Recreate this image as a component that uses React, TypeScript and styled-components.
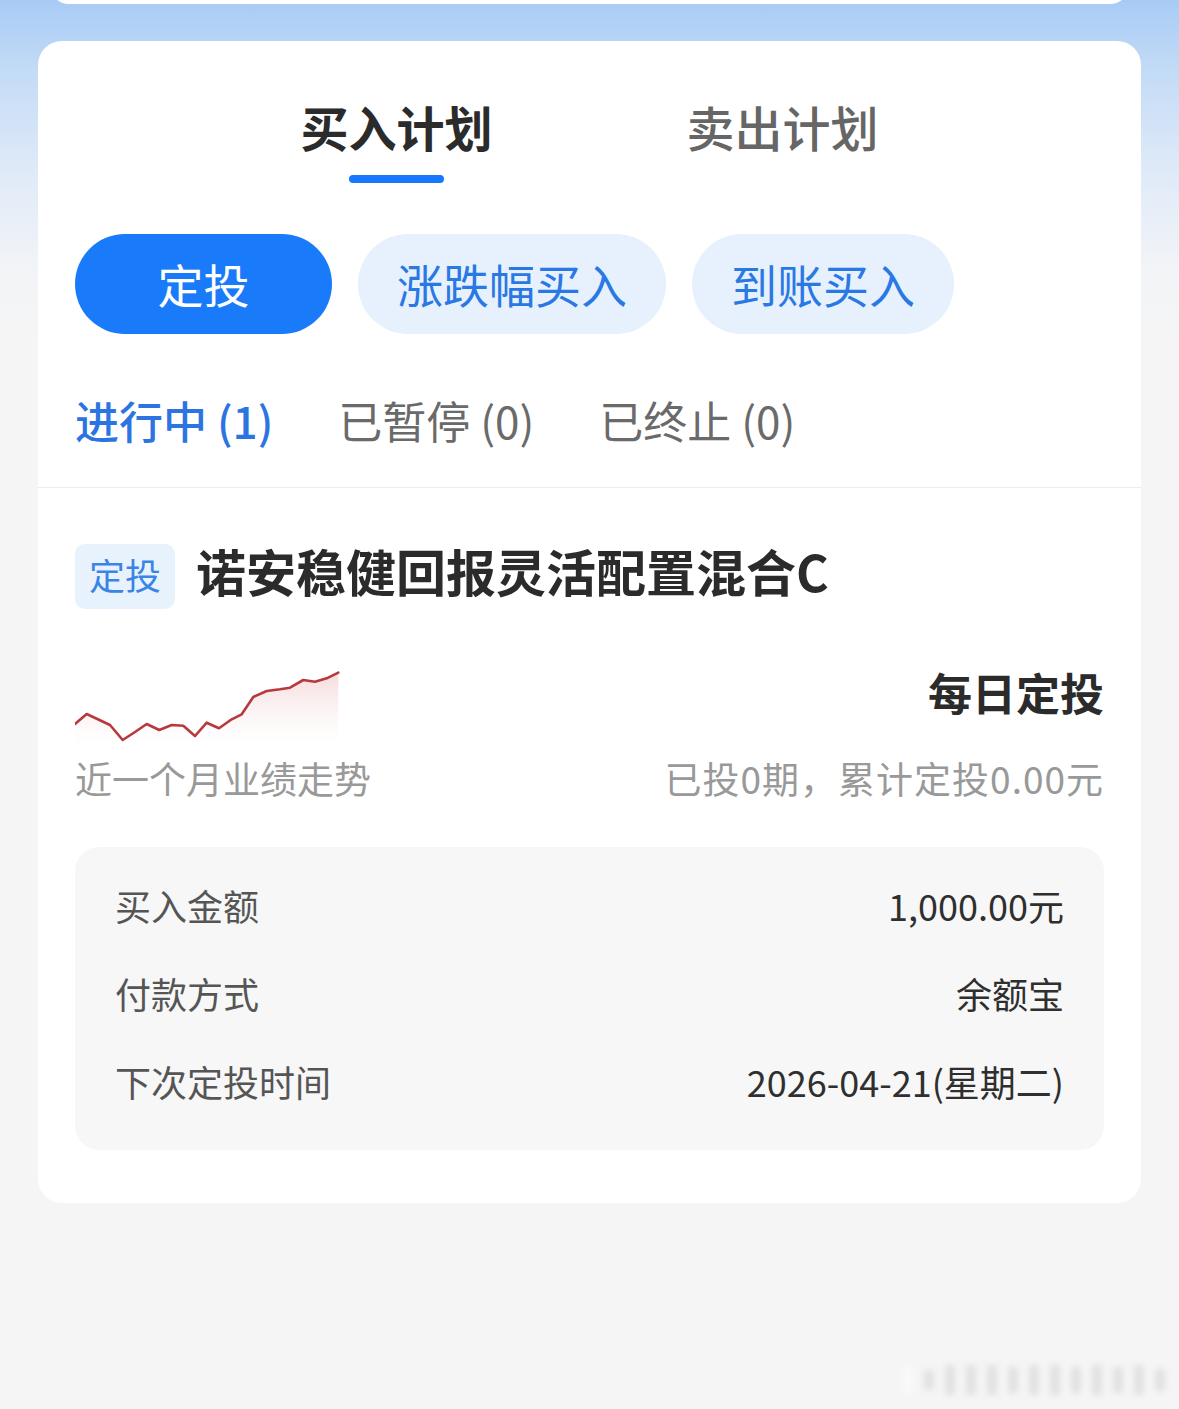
import React from "react";
import styled, { createGlobalStyle } from "styled-components";

const GlobalStyle = createGlobalStyle`
  html, body { margin: 0; padding: 0; }
  body {
    font-family: "Noto Sans CJK SC", "Noto Sans", sans-serif;
    background: #f5f5f5;
  }
  * { box-sizing: border-box; }
`;

const Page = styled.div`
  position: relative;
  min-height: 1409px;
  overflow: hidden;
  background: linear-gradient(
    180deg,
    #a8cbf5 0px,
    #c3dbf6 70px,
    #dfeaf8 170px,
    #f2f4f7 270px,
    #f5f5f5 340px
  );
  padding: 0 38px;
`;

const TopStub = styled.div`
  height: 24px;
  margin: -20px 11px 0;
  background: #ffffff;
  border-radius: 0 0 20px 20px;
`;

const Card = styled.div`
  margin-top: 37px;
  background: #ffffff;
  border-radius: 24px;
  padding-bottom: 53px;
`;

const TopSection = styled.div`
  padding: 0 37px 39px;
`;

const PlanTabs = styled.div`
  display: flex;
  justify-content: center;
  gap: 194px;
  padding-top: 55px;
`;

const PlanTab = styled.div<{ $active?: boolean }>`
  display: flex;
  flex-direction: column;
  align-items: center;
  font-size: 48px;
  line-height: 60px;
  font-weight: ${(p) => (p.$active ? 700 : 500)};
  color: ${(p) => (p.$active ? "#2b2b2b" : "#666666")};
  &::after {
    content: "";
    display: block;
    width: 95px;
    height: 8px;
    border-radius: 4px;
    margin-top: 19px;
    background: ${(p) => (p.$active ? "#1677ff" : "transparent")};
  }
`;

const Pills = styled.div`
  display: flex;
  gap: 26px;
  margin-top: 51px;
`;

const Pill = styled.div<{ $active?: boolean }>`
  height: 100px;
  min-width: 257px;
  padding: 0 39px 2px;
  border-radius: 50px;
  display: flex;
  align-items: center;
  justify-content: center;
  font-size: 46px;
  color: ${(p) => (p.$active ? "#ffffff" : "#2a78e4")};
  background: ${(p) => (p.$active ? "#1a7bfa" : "#e6f1fd")};
`;

const StatusTabs = styled.div`
  display: flex;
  gap: 65px;
  margin-top: 58px;
`;

const StatusTab = styled.div<{ $active?: boolean }>`
  font-size: 44px;
  line-height: 56px;
  padding-bottom: 4px;
  margin-bottom: -4px;
  font-weight: ${(p) => (p.$active ? 500 : 400)};
  color: ${(p) => (p.$active ? "#2b74e2" : "#6a6a6a")};
`;

const Divider = styled.div`
  height: 1px;
  background: #ececec;
`;

const FundSection = styled.div`
  padding: 56px 37px 0;
`;

const FundHeader = styled.div`
  display: flex;
  align-items: center;
  gap: 21px;
`;

const Badge = styled.div`
  width: 100px;
  height: 65px;
  border-radius: 10px;
  background: #e8f2fd;
  color: #3a84e6;
  font-size: 36px;
  padding-bottom: 6px;
  display: flex;
  align-items: center;
  justify-content: center;
`;

const FundName = styled.div`
  font-size: 50px;
  font-weight: 700;
  color: #2b2b2b;
  line-height: 65px;
  padding-bottom: 6px;
  margin-top: -6px;
`;

const ChartRow = styled.div`
  display: flex;
  justify-content: space-between;
  align-items: flex-start;
  margin-top: 54px;
`;

const PlanType = styled.div`
  margin-top: 1px;
  font-size: 44px;
  line-height: 56px;
  font-weight: 700;
  color: #2b2b2b;
`;

const CaptionRow = styled.div`
  display: flex;
  justify-content: space-between;
  margin-top: 8px;
`;

const Caption = styled.div<{ $wide?: boolean }>`
  font-size: 37px;
  line-height: 50px;
  color: #999999;
  letter-spacing: ${(p) => (p.$wide ? "1px" : "0")};
`;

const DetailBox = styled.div`
  margin-top: 44px;
  background: #f7f7f7;
  border-radius: 24px;
  padding: 33px 40px 44px;
  display: flex;
  flex-direction: column;
  gap: 38px;
`;

const DetailRow = styled.div`
  display: flex;
  justify-content: space-between;
  font-size: 36px;
  line-height: 50px;
`;

const DetailLabel = styled.span`
  color: #555555;
`;

const DetailValue = styled.span`
  color: #2f2f2f;
`;

const Watermark = styled.div`
  position: absolute;
  right: 14px;
  bottom: 14px;
  display: flex;
  align-items: center;
  gap: 11px;
  filter: blur(3px);
  opacity: 0.45;
`;

const WmBar = styled.div<{ $h: number; $light?: boolean }>`
  width: 10px;
  height: ${(p) => p.$h}px;
  background: ${(p) => (p.$light ? "#ffffff" : "#c9c9c9")};
`;

const chartPts: [number, number][] = [
  [0, 61], [11.7, 51], [35, 62], [47.7, 77], [60, 69], [71.7, 61], [84.3, 67],
  [96.7, 62], [108.3, 62.7], [120, 73], [131.7, 59.7], [144, 65.3], [156.7, 56.3],
  [166.7, 51.3], [178.3, 34], [191.7, 28], [205, 26.3], [215, 24.7], [228.3, 17],
  [240, 18.7], [251.7, 15.3], [263.3, 9.7],
];

const Trend: React.FC = () => {
  const line = chartPts.map((p) => p.join(",")).join(" ");
  const area = `M0,82 L${chartPts.map((p) => p.join(",")).join(" L")} L263.3,82 Z`;
  return (
    <svg width="266" height="82" viewBox="0 0 266 82">
      <defs>
        <linearGradient id="trendFill" x1="0" y1="0" x2="0" y2="1">
          <stop offset="0%" stopColor="#e39a9a" stopOpacity="0.35" />
          <stop offset="100%" stopColor="#f3d6d6" stopOpacity="0" />
        </linearGradient>
      </defs>
      <path d={area} fill="url(#trendFill)" />
      <polyline
        points={line}
        fill="none"
        stroke="#b7393d"
        strokeWidth="2.6"
        strokeLinejoin="round"
        strokeLinecap="round"
      />
    </svg>
  );
};

const details = [
  { label: "买入金额", value: "1,000.00元" },
  { label: "付款方式", value: "余额宝" },
  { label: "下次定投时间", value: "2026-04-21(星期二)" },
];

const wmBars = [
  { h: 30, light: true }, { h: 20 }, { h: 30 }, { h: 30 }, { h: 30 }, { h: 26 },
  { h: 30 }, { h: 30 }, { h: 26 }, { h: 30 }, { h: 26 }, { h: 30 }, { h: 22 },
];

export default function App() {
  return (
    <Page>
      <GlobalStyle />
      <TopStub />
      <Card>
        <TopSection>
          <PlanTabs>
            <PlanTab $active>买入计划</PlanTab>
            <PlanTab>卖出计划</PlanTab>
          </PlanTabs>
          <Pills>
            <Pill $active>定投</Pill>
            <Pill>涨跌幅买入</Pill>
            <Pill>到账买入</Pill>
          </Pills>
          <StatusTabs>
            <StatusTab $active>进行中 (1)</StatusTab>
            <StatusTab>已暂停 (0)</StatusTab>
            <StatusTab>已终止 (0)</StatusTab>
          </StatusTabs>
        </TopSection>
        <Divider />
        <FundSection>
          <FundHeader>
            <Badge>定投</Badge>
            <FundName>诺安稳健回报灵活配置混合C</FundName>
          </FundHeader>
          <ChartRow>
            <Trend />
            <PlanType>每日定投</PlanType>
          </ChartRow>
          <CaptionRow>
            <Caption>近一个月业绩走势</Caption>
            <Caption $wide>已投0期，累计定投0.00元</Caption>
          </CaptionRow>
          <DetailBox>
            {details.map((d) => (
              <DetailRow key={d.label}>
                <DetailLabel>{d.label}</DetailLabel>
                <DetailValue>{d.value}</DetailValue>
              </DetailRow>
            ))}
          </DetailBox>
        </FundSection>
      </Card>
      <Watermark>
        {wmBars.map((b, i) => (
          <WmBar key={i} $h={b.h} $light={b.light} />
        ))}
      </Watermark>
    </Page>
  );
}
